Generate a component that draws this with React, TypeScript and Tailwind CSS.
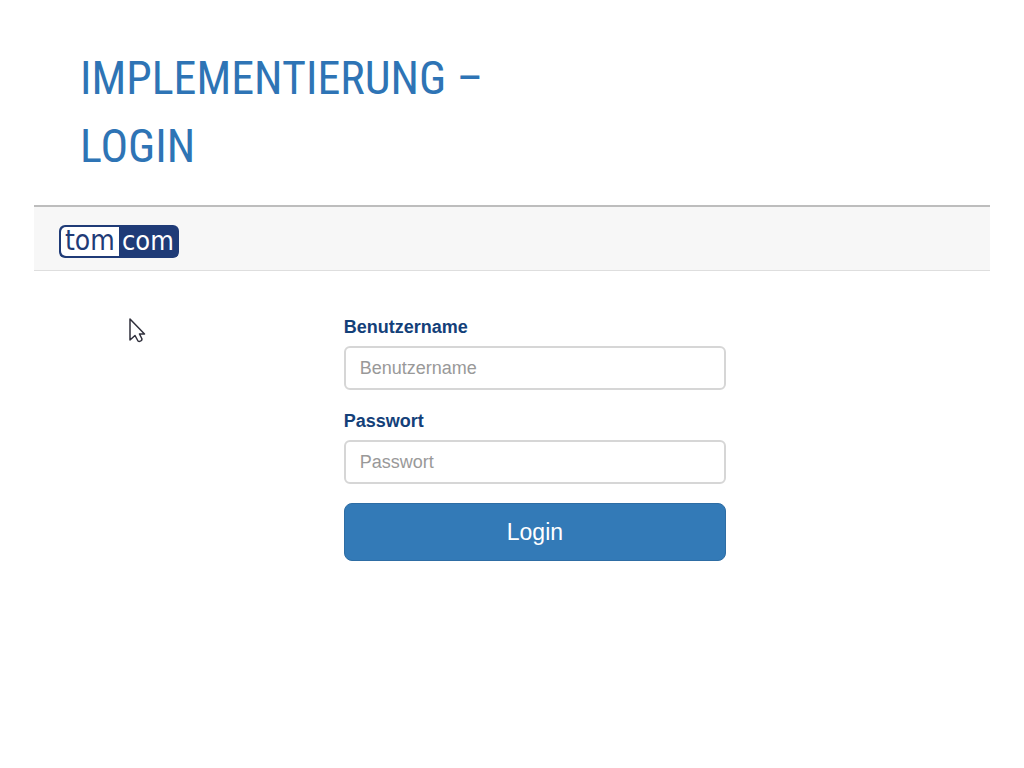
import { InputHTMLAttributes, JSX } from "react";

type FieldProps = InputHTMLAttributes<HTMLInputElement> & {
  id: string;
  label: string;
};

function Field({ id, label, ...props }: FieldProps): JSX.Element {
  return (
    <div className="flex flex-col gap-[7px]">
      <label htmlFor={id} className="text-lg leading-6 font-bold text-[#134079]">
        {label}
      </label>
      <input
        id={id}
        placeholder={label}
        className="h-11 w-full rounded-md border-2 border-[#d6d6d6] bg-white px-[14px] text-lg text-[#555555] placeholder:text-[#999999]"
        {...props}
      />
    </div>
  );
}

function TomcomLogo(): JSX.Element {
  return (
    <svg viewBox="0 0 120 33" className="h-[33px] w-[120px]" role="img" aria-label="tomcom">
      <rect width="120" height="33" rx="6" fill="#1f3b77" />
      <path d="M60 2H7a5 5 0 0 0-5 5v19a5 5 0 0 0 5 5h53z" fill="#ffffff" />
      <g fontFamily="'DejaVu Sans Condensed', 'Open Sans', sans-serif">
        <text x="6" y="25" fontSize="28" fill="#1f3b77">tom</text>
        <text x="63" y="25" fontSize="27" fill="#ffffff">com</text>
      </g>
    </svg>
  );
}

function Pointer({ className }: { className?: string }): JSX.Element {
  return (
    <svg viewBox="0 0 17 25" className={className} aria-hidden="true">
      <path
        d="M1 1v21l5-4.500 3 5.500q1.500 1 3.500-.500l.500-1.500-2.500-5h5z"
        fill="#ffffff"
        stroke="#30303c"
        strokeWidth="1.500"
        strokeLinejoin="round"
      />
    </svg>
  );
}

export default function App(): JSX.Element {
  return (
    <div className="min-h-screen bg-white pt-11 font-['Liberation_Sans',Arial,sans-serif]">
      <h1 className="px-20 font-['Roboto_Condensed','Liberation_Sans_Narrow',sans-serif] text-[46px] leading-[68px] text-[#2e74b5]">
        IMPLEMENTIERUNG –
        <br />
        LOGIN
      </h1>

      <div className="relative mx-[34px] mt-[25px]">
        <header className="flex h-[66px] items-center border-t-2 border-b border-t-[#bdbdbd] border-b-[#dedede] bg-[#f7f7f7] px-[25px] pt-1.5">
          <a href="#">
            <TomcomLogo />
          </a>
        </header>

        <form
          className="mt-11 ml-[32.4%] flex w-2/5 flex-col gap-[19px]"
          onSubmit={(e) => e.preventDefault()}
        >
          <Field id="username" label="Benutzername" type="text" autoComplete="username" />
          <Field id="password" label="Passwort" type="password" autoComplete="current-password" />
          <button
            type="submit"
            className="h-[58px] w-full rounded-lg border border-[#2e6da4] bg-[#337ab7] text-[23px] text-white"
          >
            Login
          </button>
        </form>

        <Pointer className="absolute top-[113px] left-[95px] h-[25px] w-[17px]" />
      </div>
    </div>
  );
}
